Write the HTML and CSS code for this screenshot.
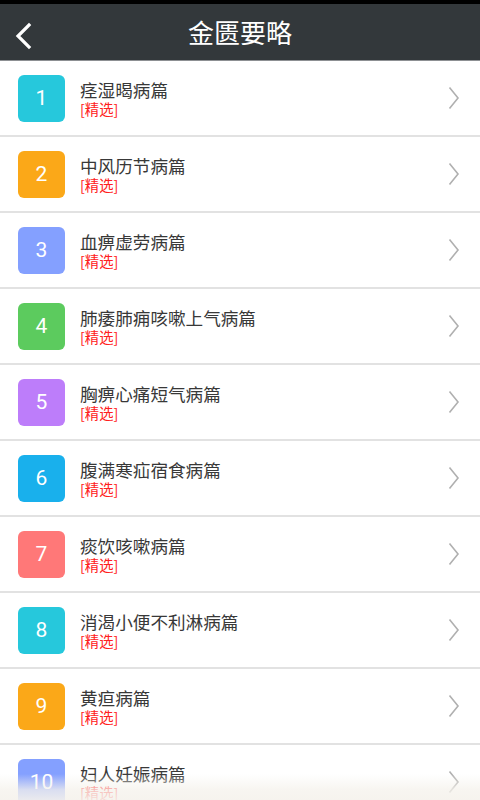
FILE: index.html
```html
<!DOCTYPE html>
<html lang="zh">
<head>
<meta charset="utf-8">
<title>金匮要略</title>
<link rel="stylesheet" href="styles.css">
</head>
<body>
<div class="screen">
  <div class="statusbar"></div>
  <header class="topbar">
    <svg class="back" width="20" height="28" viewBox="0 0 20 28"><polyline points="15,3 4,14 15,25" fill="none" stroke="#fff" stroke-width="3.2" stroke-linecap="square"/></svg>
    <h1 class="title">金匮要略</h1>
  </header>
  <ul class="list">
    <li class="row"><span class="num c-cyan">1</span><div class="txt"><div class="name">痉湿暍病篇</div><div class="tag">[精选]</div></div><svg class="chev" width="12" height="24" viewBox="0 0 12 24"><polyline points="1.5,1.5 10,12 1.5,22.5" fill="none" stroke="#b0b0b0" stroke-width="1.6"/></svg></li>
    <li class="row"><span class="num c-orange">2</span><div class="txt"><div class="name">中风历节病篇</div><div class="tag">[精选]</div></div><svg class="chev" width="12" height="24" viewBox="0 0 12 24"><polyline points="1.5,1.5 10,12 1.5,22.5" fill="none" stroke="#b0b0b0" stroke-width="1.6"/></svg></li>
    <li class="row"><span class="num c-blue">3</span><div class="txt"><div class="name">血痹虚劳病篇</div><div class="tag">[精选]</div></div><svg class="chev" width="12" height="24" viewBox="0 0 12 24"><polyline points="1.5,1.5 10,12 1.5,22.5" fill="none" stroke="#b0b0b0" stroke-width="1.6"/></svg></li>
    <li class="row"><span class="num c-green">4</span><div class="txt"><div class="name">肺痿肺痈咳嗽上气病篇</div><div class="tag">[精选]</div></div><svg class="chev" width="12" height="24" viewBox="0 0 12 24"><polyline points="1.5,1.5 10,12 1.5,22.5" fill="none" stroke="#b0b0b0" stroke-width="1.6"/></svg></li>
    <li class="row"><span class="num c-purple">5</span><div class="txt"><div class="name">胸痹心痛短气病篇</div><div class="tag">[精选]</div></div><svg class="chev" width="12" height="24" viewBox="0 0 12 24"><polyline points="1.5,1.5 10,12 1.5,22.5" fill="none" stroke="#b0b0b0" stroke-width="1.6"/></svg></li>
    <li class="row"><span class="num c-sky">6</span><div class="txt"><div class="name">腹满寒疝宿食病篇</div><div class="tag">[精选]</div></div><svg class="chev" width="12" height="24" viewBox="0 0 12 24"><polyline points="1.5,1.5 10,12 1.5,22.5" fill="none" stroke="#b0b0b0" stroke-width="1.6"/></svg></li>
    <li class="row"><span class="num c-red">7</span><div class="txt"><div class="name">痰饮咳嗽病篇</div><div class="tag">[精选]</div></div><svg class="chev" width="12" height="24" viewBox="0 0 12 24"><polyline points="1.5,1.5 10,12 1.5,22.5" fill="none" stroke="#b0b0b0" stroke-width="1.6"/></svg></li>
    <li class="row"><span class="num c-cyan">8</span><div class="txt"><div class="name">消渴小便不利淋病篇</div><div class="tag">[精选]</div></div><svg class="chev" width="12" height="24" viewBox="0 0 12 24"><polyline points="1.5,1.5 10,12 1.5,22.5" fill="none" stroke="#b0b0b0" stroke-width="1.6"/></svg></li>
    <li class="row"><span class="num c-orange">9</span><div class="txt"><div class="name">黄疸病篇</div><div class="tag">[精选]</div></div><svg class="chev" width="12" height="24" viewBox="0 0 12 24"><polyline points="1.5,1.5 10,12 1.5,22.5" fill="none" stroke="#b0b0b0" stroke-width="1.6"/></svg></li>
    <li class="row"><span class="num c-blue">10</span><div class="txt"><div class="name">妇人妊娠病篇</div><div class="tag">[精选]</div></div><svg class="chev" width="12" height="24" viewBox="0 0 12 24"><polyline points="1.5,1.5 10,12 1.5,22.5" fill="none" stroke="#b0b0b0" stroke-width="1.6"/></svg></li>
  </ul>
  <div class="fade"></div>
</div>
</body>
</html>
```
FILE: styles.css
```css
html, body {
  margin: 0;
  padding: 0;
  background: #fff;
}
body {
  font-family: "Noto Sans CJK SC", "Noto Sans", sans-serif;
}
.screen {
  position: relative;
  width: 480px;
  height: 800px;
  overflow: hidden;
  background: #fff;
}
.statusbar {
  height: 4px;
  background: #000;
}
.topbar {
  height: 56px;
  background: #33383b;
  border-bottom: 1px solid #8d9093;
  display: flex;
  align-items: center;
  justify-content: center;
  position: relative;
}
.back {
  position: absolute;
  left: 14px;
  top: 18px;
}
.title {
  margin: 0;
  color: #fff;
  font-size: 26px;
  font-weight: 400;
  line-height: 1;
  letter-spacing: 0;
}
.list {
  list-style: none;
  margin: 0;
  padding: 0;
}
.row {
  height: 74px;
  border-bottom: 2px solid #e2e2e2;
  display: flex;
  align-items: center;
  padding-left: 18px;
  padding-right: 20px;
}
.num {
  width: 47px;
  height: 47px;
  border-radius: 6px;
  display: flex;
  align-items: center;
  justify-content: center;
  color: #fff;
  font-family: Roboto, "Noto Sans", sans-serif;
  font-size: 21px;
  flex: none;
}
.c-cyan { background: #26c8dc; }
.c-orange { background: #fba818; }
.c-blue { background: #84a0ff; }
.c-green { background: #5ccb5e; }
.c-purple { background: #bd7dfa; }
.c-sky { background: #19b0ec; }
.c-red { background: #ff7878; }
.txt {
  flex: 1;
  margin-left: 15px;
  display: flex;
  flex-direction: column;
}
.name {
  color: #383838;
  font-size: 17.6px;
  line-height: 21px;
}
.tag {
  color: #ff2020;
  font-size: 14.3px;
  line-height: 17px;
}
.chev {
  flex: none;
}
.fade {
  position: absolute;
  left: 0;
  right: 0;
  bottom: 0;
  height: 26px;
  background: linear-gradient(to bottom, rgba(245,242,236,0) 0%, rgba(245,242,236,0.75) 60%, rgba(245,242,236,0.9) 100%);
}
```
